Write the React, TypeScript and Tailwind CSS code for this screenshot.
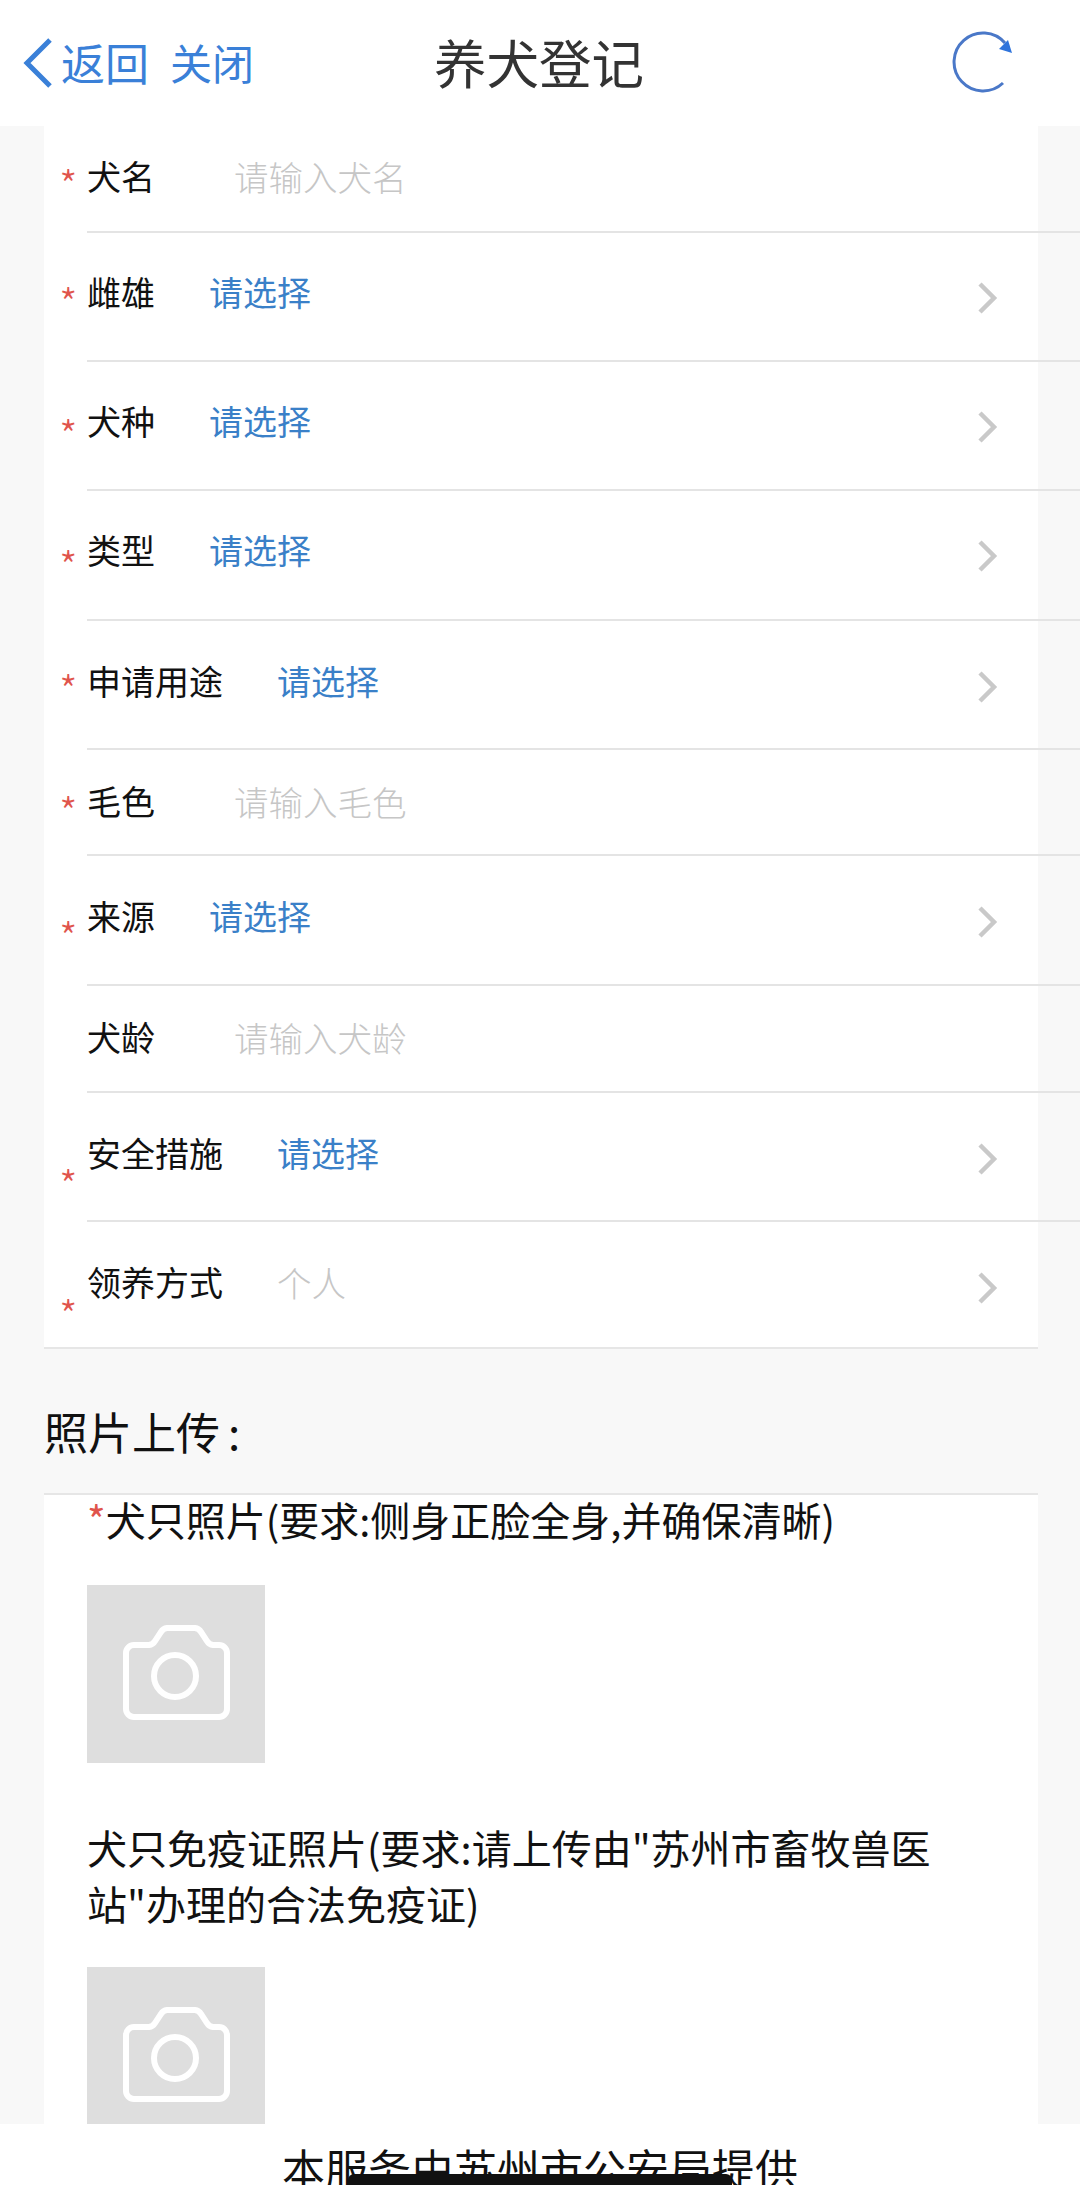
const cjk = "font-['Noto_Sans_CJK_SC',_'Noto_Sans',_sans-serif]";

type Row = {
  label: string;
  value: string;
  kind: "select" | "input" | "fixed";
  height: string;
  pad: string;
  starTop?: string;
  valueGap: string;
};

const rows: Row[] = [
  { label: "犬名", value: "请输入犬名", kind: "input", height: "h-[107px]", pad: "pt-[28px]", starTop: "mt-[37px]", valueGap: "ml-[79px]" },
  { label: "雌雄", value: "请选择", kind: "select", height: "h-[129px]", pad: "pt-[37px]", starTop: "mt-[48px]", valueGap: "ml-[54px]" },
  { label: "犬种", value: "请选择", kind: "select", height: "h-[129px]", pad: "pt-[37px]", starTop: "mt-[51px]", valueGap: "ml-[54px]" },
  { label: "类型", value: "请选择", kind: "select", height: "h-[130px]", pad: "pt-[37px]", starTop: "mt-[53px]", valueGap: "ml-[54px]" },
  { label: "申请用途", value: "请选择", kind: "select", height: "h-[129px]", pad: "pt-[38px]", starTop: "mt-[47px]", valueGap: "ml-[54px]" },
  { label: "毛色", value: "请输入毛色", kind: "input", height: "h-[106px]", pad: "pt-[29px]", starTop: "mt-[40px]", valueGap: "ml-[79px]" },
  { label: "来源", value: "请选择", kind: "select", height: "h-[130px]", pad: "pt-[38px]", starTop: "mt-[59px]", valueGap: "ml-[54px]" },
  { label: "犬龄", value: "请输入犬龄", kind: "input", height: "h-[107px]", pad: "pt-[29px]", valueGap: "ml-[79px]" },
  { label: "安全措施", value: "请选择", kind: "select", height: "h-[129px]", pad: "pt-[38px]", starTop: "mt-[70px]", valueGap: "ml-[54px]" },
  { label: "领养方式", value: "个人", kind: "fixed", height: "h-[125px]", pad: "pt-[38px]", starTop: "mt-[71px]", valueGap: "ml-[54px]" },
];

function Camera() {
  return (
    <div className="w-[178px] h-[178px] shrink-0 bg-[#dedede]">
      <svg width="178" height="178" viewBox="0 0 178 178" fill="none" stroke="#fff" strokeWidth="6">
        <path d="M47 60H62a8 8 0 0 0 6-4l6-9a8 8 0 0 1 6-4h28a8 8 0 0 1 6 4l6 9a8 8 0 0 0 6 4h6a8 8 0 0 1 8 8v56a8 8 0 0 1-8 8H47a8 8 0 0 1-8-8V68a8 8 0 0 1 8-8z" />
        <circle cx="88" cy="91" r="21" />
      </svg>
    </div>
  );
}

function Chevron() {
  return (
    <svg className="ml-auto mr-[124px] mt-[12px] shrink-0" width="24" height="32" viewBox="0 0 24 32" fill="none" stroke="#c9c9c9" strokeWidth="4.5">
      <path d="M4 2l14 14L4 30" />
    </svg>
  );
}

export default function App() {
  return (
    <div className={`${cjk} w-[1080px] h-[2185px] overflow-hidden flex flex-col bg-[#f8f8f8]`}>
      {/* Header */}
      <header className="h-[126px] shrink-0 bg-white flex items-center">
        <div className="w-[434px] shrink-0 flex items-center pl-[23px] text-[#3a80d8]">
          <svg width="30" height="50" viewBox="0 0 30 50" fill="none" stroke="currentColor" strokeWidth="5">
            <path d="M27 2L4 25l23 23" />
          </svg>
          <span className="ml-[8px] mb-[3px] text-[44px] leading-none">返回</span>
          <span className="ml-[21px] mb-[3px] text-[42px] leading-none">关闭</span>
        </div>
        <h1 className="mb-[4px] text-[52.5px] leading-none text-[#333]">养犬登记</h1>
        <div className="flex-1 flex justify-end pr-[66px]">
          <svg width="62" height="64" viewBox="0 0 62 64" fill="none">
            <path d="M51 52A29 29 0 1 1 53 12" stroke="#4a78c8" strokeWidth="3" />
            <path d="M47 18L56 9l4 13z" fill="#2f74dc" />
          </svg>
        </div>
      </header>

      {/* Scrolling form */}
      <main className="flex-1 min-h-0 overflow-hidden">
        <section className="ml-[44px] w-[994px] bg-white border-b-2 border-[#e6e6e6] pl-[18px]">
          {rows.map((row) => (
            <div key={row.label} className="flex">
              <div className="w-[25px] shrink-0">
                {row.starTop && (
                  <span className={`block ${row.starTop} -ml-[3px] text-[42px] leading-none font-light text-[#e0544c]`}>*</span>
                )}
              </div>
              <div
                className={`${row.height} ${row.pad} w-[1037px] -mr-[80px] shrink-0 flex items-start text-[34px] leading-[44px] ${
                  row.label === "领养方式" ? "" : "border-b-2 border-[#e4e4e4]"
                }`}
              >
                <span className="text-[#111]">{row.label}</span>
                <span
                  className={`${row.valueGap} ${
                    row.kind === "select" ? "text-[#3a80c8]" : "text-[#c6c6c6] font-light text-[34.5px]"
                  }`}
                >
                  {row.value}
                </span>
                {row.kind !== "input" && <Chevron />}
              </div>
            </div>
          ))}
        </section>

        <h2 className="pl-[44px] pt-[54px] h-[144px] text-[44px] leading-[56px] text-[#111]">
          照片上传<span className="ml-[8px]">:</span>
        </h2>

        <section className="ml-[44px] w-[994px] bg-white border-t-2 border-[#e6e6e6] pl-[43px]">
          <p className="h-[91px] -mt-[1px] text-[40px] leading-[50px] text-[#111]">
            <span className="text-[#e0544c]">*</span>犬只照片(要求:侧身正脸全身,并确保清晰)
          </p>
          <Camera />
          <p className="pt-[56px] pb-[36px] w-[880px] text-[40px] leading-[56px] text-[#111]">
            犬只免疫证照片(要求:请上传由"苏州市畜牧兽医站"办理的合法免疫证)
          </p>
          <Camera />
        </section>
      </main>

      {/* Footer */}
      <footer className="relative h-[61px] shrink-0 bg-white overflow-hidden text-center text-[43px] leading-[60px] pt-[13px] text-[#111]">
        本服务由苏州市公安局提供
        <div className="absolute left-[348px] bottom-0 w-[384px] h-[11px] rounded-t-[6px] bg-[#111]" />
      </footer>
    </div>
  );
}
